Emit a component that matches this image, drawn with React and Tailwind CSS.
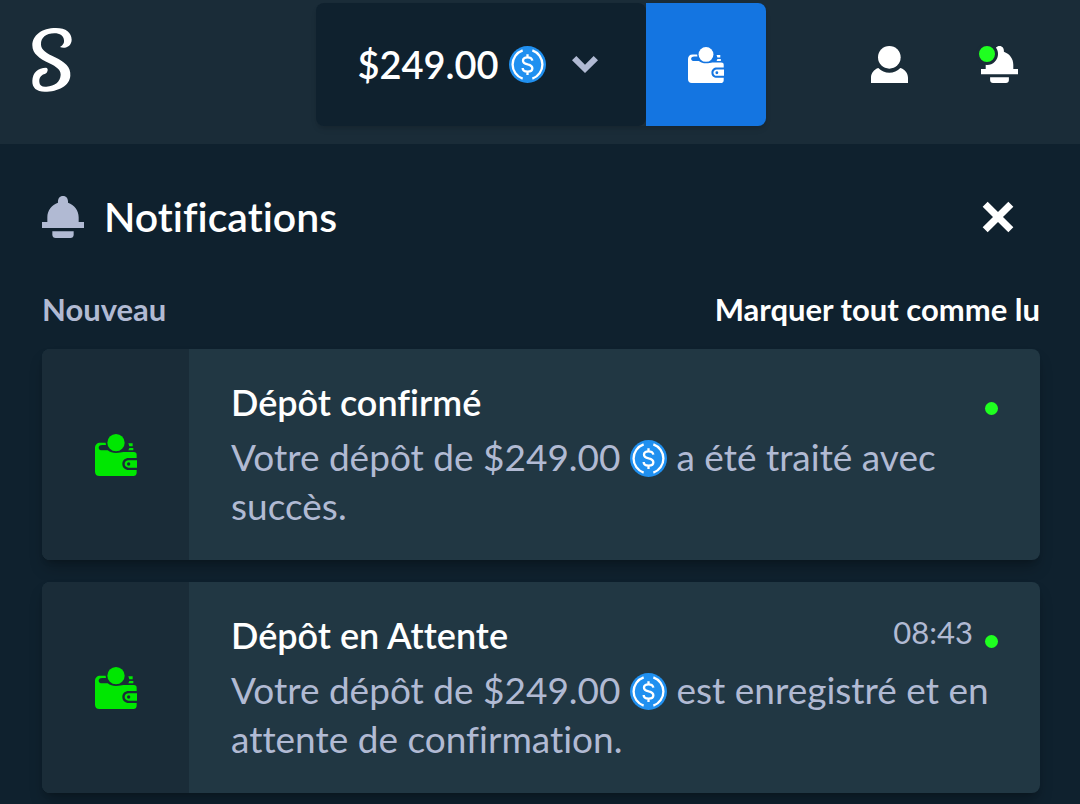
import React, { useState } from 'react';

const NOTIFICATIONS = [
  { id: 1, title: 'Dépôt confirmé', time: '', before: 'Votre dépôt de $249.00', after: 'a été traité avec succès.' },
  {
    id: 2,
    title: 'Dépôt en Attente',
    time: '08:43',
    before: 'Votre dépôt de $249.00',
    after: 'est enregistré et en attente de confirmation.',
  },
];

// --- ICONS ---
const Logo = () => (
  <svg viewBox="66 53 120 192" className="h-16 w-10 fill-current" aria-hidden="true">
    <path d="M150 110C160 104 163 98 162 90C161 76 150 69 133 69C108 69 92 82 93 103C94 120 110 128 135 141C165 156 183 170 181 196C179 226 145 244 104 244C80 244 66 232 67 211C68 187 84 172 108 172C115 173 114 182 110 187C106 191 103 190 98 193C90 198 87 205 88 215C89 226 96 230 109 229C135 227 151 214 152 193C152 178 140 170 118 159C88 145 67 130 67 105C67 75 95 53 138 53C168 53 185 67 185 88C185 107 166 117 150 110Z" />
  </svg>
);

const WalletIcon = ({ className }) => (
  <svg viewBox="0 0 126 126" className={className} fill="currentColor" aria-hidden="true">
    <circle cx="63" cy="26" r="26" />
    <path d="M100 28h13v9h-10zM103 42h12v7h-15z" />
    <path
      fillRule="evenodd"
      d="M16 26H32L33 33H22C14 33 11 37 11 41C11 46 15 49 22 49H38C45 55 53 57 63 57C73 57 80 54 85 54H116C122 54 125 57 125 62V72H101C90 72 82 79 82 90C82 101 90 108 101 108H125V116C125 122 121 126 115 126H13C5 126 0 121 0 113V42C0 32 6 26 16 26Z"
    />
    <path fillRule="evenodd" d="M126 79V101H101C94 101 89 96 89 90C89 84 94 79 101 79ZM101 85A5 5 0 1 0 101 95A5 5 0 1 0 101 85Z" />
  </svg>
);

const UserIcon = ({ className }) => (
  <svg viewBox="0 0 111 111" className={className} fill="currentColor" aria-hidden="true">
    <circle cx="55" cy="34" r="34" />
    <path d="M0 111V95C0 82 9 70 22 66A46 46 0 0 0 88 66C102 70 111 82 111 95V111Z" />
  </svg>
);

const BellIcon = ({ className }) => (
  <svg viewBox="0 0 126 126" className={className} fill="currentColor" aria-hidden="true">
    <path d="M0 78H16V64C16 43 29 27 48 20C47 8 53 0 63 0C73 0 79 8 78 20C97 27 110 43 110 64V78H126V96H0Z" />
    <path d="M31 106H95V116C95 122 91 126 85 126H41C35 126 31 122 31 116Z" />
  </svg>
);

const ChevronIcon = () => (
  <svg viewBox="0 0 78 51" className="h-[17px] w-[26px] text-[#b1bad3]" fill="currentColor" aria-hidden="true">
    <path d="M0 13L13 0L39 26L65 0L78 13L39 51Z" />
  </svg>
);

const CloseIcon = () => (
  <svg viewBox="0 0 96 96" className="size-8" fill="currentColor" aria-hidden="true">
    <path d="M2 17L17 2L48 33L79 2L94 17L63 48L94 79L79 94L48 63L17 94L2 79L33 48Z" />
  </svg>
);

const CoinIcon = ({ className }) => (
  <svg viewBox="0 0 111 111" className={className} aria-hidden="true">
    <circle cx="55.5" cy="55.5" r="55.5" fill="#2090f0" />
    <g fill="none" stroke="#fff" strokeWidth="7">
      <path d="M41 13A45 45 0 0 0 41 98M70 13A45 45 0 0 1 70 98" />
      <path d="M55.5 25V35M55.5 76V87M70 44C69 38 64 34 55.5 34C47 34 42 38 42 44C42 51 48 53 56 55C65 57 70 60 70 67C70 74 64 77 56 77C47 77 41 73 41 66" />
    </g>
  </svg>
);

const NotificationCard = ({ item, unread }) => (
  <li className="flex overflow-hidden rounded-lg bg-[#213743] shadow-lg shadow-black/25">
    <div className="flex w-[147px] shrink-0 items-center justify-center bg-[#1a2c38] text-[#00e701]">
      <WalletIcon className="size-[42px]" />
    </div>
    <div className="min-w-0 flex-1 pt-[29px] pr-[42px] pb-[30px] pl-[42px]">
      <div className="flex items-start justify-between">
        <h3 className="text-[36px] leading-[48px] font-semibold text-white">{item.title}</h3>
        <div className="flex items-start gap-3 text-[31px] leading-[42px]">
          {item.time && <time>{item.time}</time>}
          {unread && <span className="mt-6 size-[13px] rounded-full bg-[#1fff20]" />}
        </div>
      </div>
      <p className="mt-1.5 text-[37px] leading-[49px]">
        {item.before} <CoinIcon className="inline size-[37px] align-[-6px]" /> {item.after}
      </p>
    </div>
  </li>
);

export default function App() {
  const [open, setOpen] = useState(true);
  const [unread, setUnread] = useState(true);

  return (
    <div className="min-h-screen bg-[#0f212e] font-['Lato',sans-serif] text-[#b1bad3] [font-variant-ligatures:none]">
      {/* HEADER */}
      <header className="grid grid-cols-[1fr_auto_1fr] items-center bg-[#1a2c38] pt-[3px] pr-[30px] pb-[18px] pl-8 text-white">
        <a href="#" aria-label="Accueil" className="justify-self-start pb-2.5">
          <Logo />
        </a>
        <div className="flex h-[123px] rounded-lg shadow-md">
          <button className="flex items-center rounded-lg bg-[#0f212e] pr-12 pl-[41px] text-[38px] font-semibold">
            $249.00
            <CoinIcon className="mr-[26px] ml-2.5 size-[37px]" />
            <ChevronIcon />
          </button>
          <button aria-label="Portefeuille" className="flex w-[120px] items-center justify-center rounded-r-lg bg-[#1475e1]">
            <WalletIcon className="size-9" />
          </button>
        </div>
        <div className="flex items-center justify-end gap-[73px] pr-8">
          <button aria-label="Profil">
            <UserIcon className="size-[37px]" />
          </button>
          <button aria-label="Notifications" className="relative" onClick={() => setOpen(true)}>
            <BellIcon className="size-[37px]" />
            {unread && (
              <span className="absolute -top-[3px] -left-[5px] size-[22px] rounded-full border-[3px] border-[#1a2c38] bg-[#1fff20]" />
            )}
          </button>
        </div>
      </header>

      {/* NOTIFICATIONS */}
      {open && (
        <main className="pt-[49px] pr-10 pb-[11px] pl-[42px]">
          <div className="flex items-center justify-between pr-[26px]">
            <div className="flex items-center gap-5">
              <BellIcon className="size-[42px]" />
              <h2 className="text-[41px] leading-[48px] font-semibold text-white">Notifications</h2>
            </div>
            <button aria-label="Fermer" className="text-white" onClick={() => setOpen(false)}>
              <CloseIcon />
            </button>
          </div>
          <div className="mt-12 flex items-center justify-between text-[31px] leading-10 font-bold">
            <span>Nouveau</span>
            <button className="text-white" onClick={() => setUnread(false)}>
              Marquer tout comme lu
            </button>
          </div>
          <ul className="mt-5 flex flex-col gap-[22px]">
            {NOTIFICATIONS.map((item) => (
              <NotificationCard key={item.id} item={item} unread={unread} />
            ))}
          </ul>
        </main>
      )}
    </div>
  );
}
